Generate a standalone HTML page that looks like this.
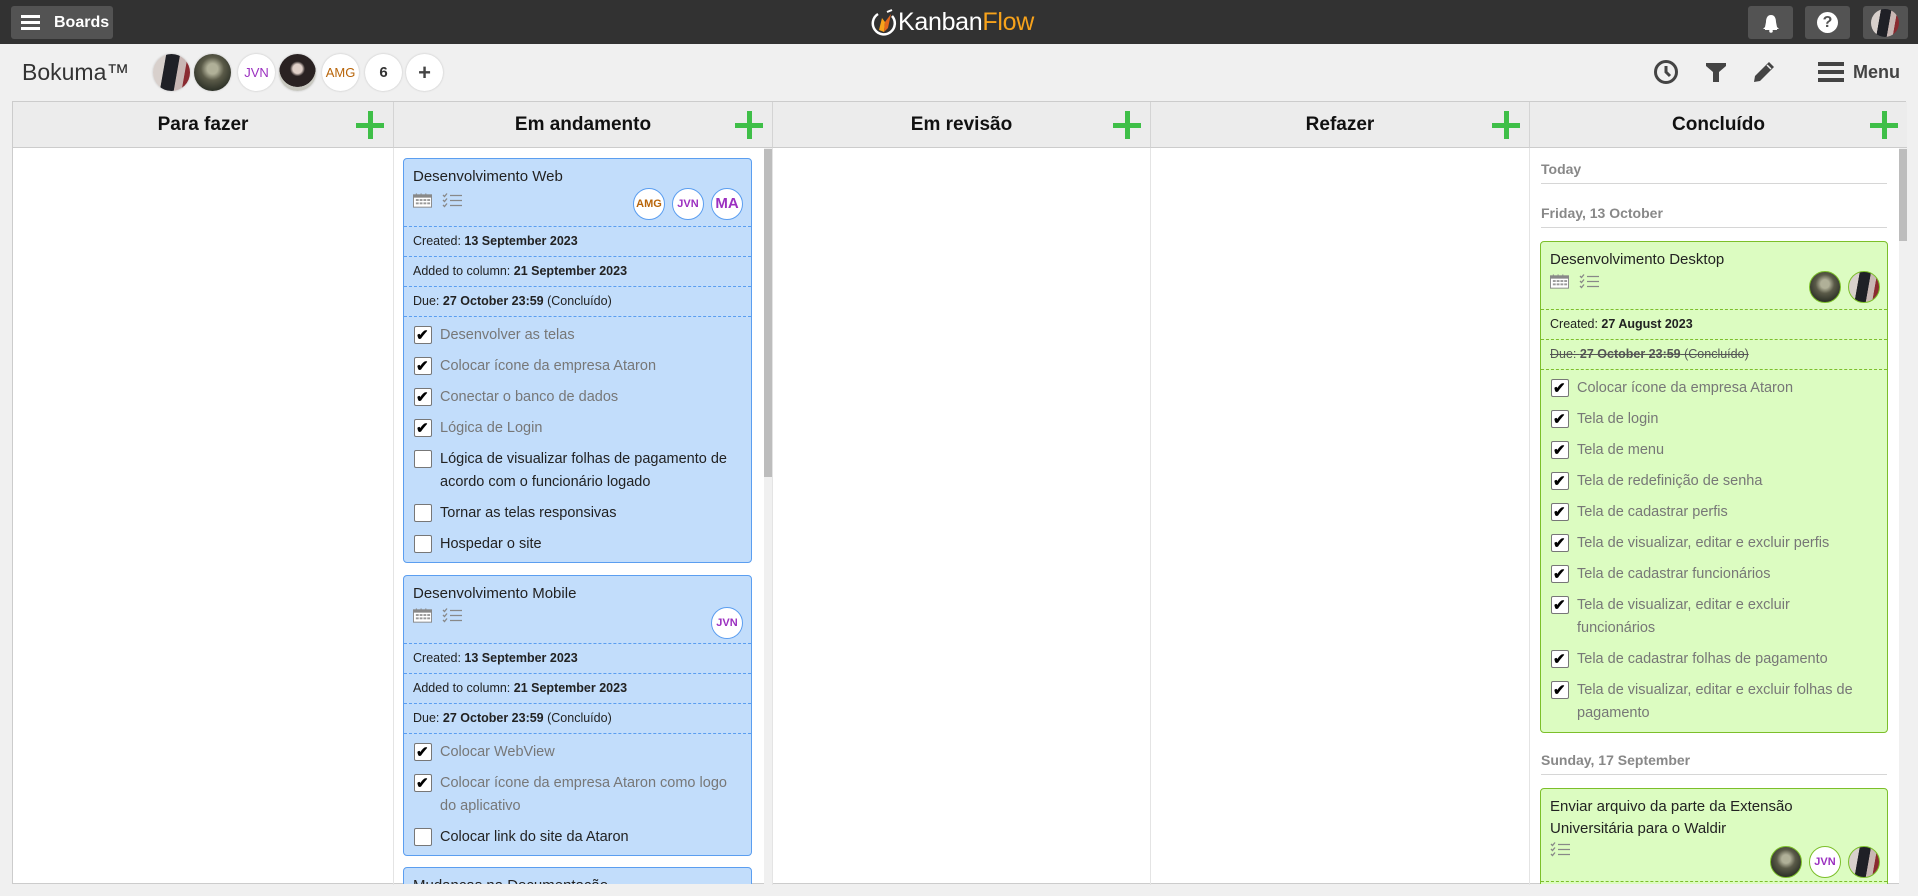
<!DOCTYPE html>
<html><head><meta charset="utf-8">
<style>
*{box-sizing:border-box;margin:0;padding:0}
body{width:1918px;height:896px;overflow:hidden;background:#f0f0f0;font-family:"Liberation Sans",Arial,sans-serif;position:relative}
.top{position:absolute;left:0;top:0;width:1918px;height:44px;background:#323232}
.tbtn{position:absolute;top:6px;height:33px;background:#535353;border-radius:3px}
.abs{position:absolute}
.av{position:absolute;width:37px;height:37px;border-radius:50%;background:#fff;box-shadow:0 0 2px rgba(0,0,0,.2);text-align:center;line-height:37px;font-size:13px}
.cav{position:absolute;top:0;width:32px;height:32px;border-radius:50%;background:#fff;text-align:center;line-height:30px;font-size:11px;font-weight:bold}
.ph1{background:linear-gradient(100deg,#d8d0cc 0 30%,#1f2026 31% 62%,#c9b7b4 63% 80%,#8a2a30 81%) !important}
.ph2{background:radial-gradient(circle at 50% 40%,#b0b098 0 18%,#5a5a48 40%,#2e3228 75%) !important}
.ph3{background:radial-gradient(circle at 50% 40%,#e0d0c8 0 16%,#2a2222 26% 62%,#c8c8c0 63%) !important}
.board{position:absolute;left:12px;top:101px;width:1894px;height:783px;background:#fff;border:1px solid #ccc}
.hdr{position:absolute;top:0;height:46px;background:#ececec;border-bottom:1px solid #ccc;border-right:1px solid #d4d4d4;text-align:center;font-weight:bold;font-size:19px;line-height:45px;color:#111}
.plus{position:absolute;right:9px;top:9px;width:28px;height:28px}
.plus:before{content:"";position:absolute;left:0;top:11.5px;width:28px;height:5px;background:#3fbf48}
.plus:after{content:"";position:absolute;top:0;left:11.5px;height:28px;width:5px;background:#3fbf48}
.vline{position:absolute;top:46px;width:1px;height:737px;background:#e4e4e4}
.card{position:absolute;border-radius:4px;padding:7px 0 0 0;font-size:15px;color:#222}
.blue{background:#c2ddfb;border:1px solid #5b9ef0}
.green{background:#dcfcc1;border:1px solid #7cbf2a}
.title{line-height:22px;padding-left:9px;color:#222}
.irow{position:relative;height:38px}
.ico{position:absolute;left:9px;top:5px}
.blue .cav{border:1px solid #5b9ef0}
.green .cav{border:1px solid #7cbf2a}
.info{border-top:1px dashed #5b9ef0;height:30px;line-height:29px;font-size:12.5px;padding-left:9px;color:#222}
.green .info{border-top-color:#7cbf2a}
.list{border-top:1px dashed #5b9ef0;padding-top:3px;padding-bottom:2px}
.green .list{border-top-color:#7cbf2a}
.it{position:relative;padding:4px 22px 4px 36px;line-height:23px;font-size:14.5px;color:#222}
.it.done{color:#777}
.cb{position:absolute;left:10px;top:6px;width:18px;height:18px;background:#fff;border:1px solid #777;border-radius:2px}
.done .cb:after{content:"\2714";position:absolute;left:1px;top:0px;font-size:15px;font-weight:bold;color:#000;line-height:17px}
.sec{position:absolute;left:1541px;width:346px;border-bottom:1px solid #d6d6d6;font-weight:bold;font-size:14px;color:#888;padding-bottom:6px}
.amg{color:#b8650a}.jvn{color:#9b30c0}
</style></head><body>
<div class="top">
  <div class="tbtn" style="left:11px;width:102px">
    <div class="abs" style="left:10px;top:9px;width:19px;height:3px;background:#fff"></div>
    <div class="abs" style="left:10px;top:15px;width:19px;height:3px;background:#fff"></div>
    <div class="abs" style="left:10px;top:21px;width:19px;height:3px;background:#fff"></div>
    <div class="abs" style="left:43px;top:0;line-height:33px;color:#fff;font-weight:bold;font-size:16px">Boards</div>
  </div>
  <svg class="abs" style="left:870px;top:8px" width="28" height="30" viewBox="0 0 28 30">
    <path d="M8 6 A11 11 0 1 0 22 8" fill="none" stroke="#fff" stroke-width="2.5"/>
    <path d="M9 22 L12 10 L15 14 L14 24Z" fill="#f7a21b"/><path d="M15 14 L21 6 L18 20 L14 24Z" fill="#e2661d"/>
    <path d="M17 4 L22 2" stroke="#fff" stroke-width="2"/>
  </svg>
  <div class="abs" style="left:898px;top:7px;font-size:25px;line-height:30px;color:#fff;letter-spacing:-.3px">Kanban<span style="color:#f7a21b">Flow</span></div>
  <div class="tbtn" style="left:1748px;width:45px"><svg class="abs" style="left:13px;top:7px" width="20" height="20" viewBox="0 0 20 20"><path d="M10 2 C6 2 5 6 5 9 L4 14 L2 16 L18 16 L16 14 L15 9 C15 6 14 2 10 2Z" fill="#fff"/><rect x="4" y="15" width="12" height="2" fill="#fff"/><circle cx="10" cy="18" r="1.8" fill="#fff"/></svg></div>
  <div class="tbtn" style="left:1805px;width:45px"><div class="abs" style="left:12px;top:6px;width:21px;height:21px;border-radius:50%;background:#fff;color:#535353;font-weight:bold;font-size:16px;text-align:center;line-height:21px">?</div></div>
  <div class="tbtn" style="left:1863px;width:45px"><div class="abs ph1" style="left:8px;top:3px;width:28px;height:28px;border-radius:50%"></div></div>
</div>

<div class="abs" style="left:22px;top:57px;font-size:23px;color:#333;line-height:30px">Bokuma™</div>
<div class="av ph1" style="left:153px;top:54px"></div>
<div class="av ph2" style="left:194px;top:54px"></div>
<div class="av jvn" style="left:238px;top:54px">JVN</div>
<div class="av ph3" style="left:279px;top:54px"></div>
<div class="av amg" style="left:322px;top:54px">AMG</div>
<div class="av" style="left:365px;top:54px;color:#333;font-weight:bold;font-size:15px">6</div>
<div class="av" style="left:406px;top:54px;color:#444;font-weight:bold;font-size:22px">+</div>

<svg class="abs" style="left:1653px;top:59px" width="26" height="26" viewBox="0 0 26 26"><circle cx="13" cy="13" r="10.5" fill="none" stroke="#444" stroke-width="3"/><path d="M13 7 L13 13 L17 17" fill="none" stroke="#444" stroke-width="3"/></svg>
<svg class="abs" style="left:1704px;top:60px" width="24" height="24" viewBox="0 0 24 24"><path d="M2 3 L22 3 L22 6 L15 12 L15 22 L9 22 L9 12 L2 6Z" fill="#444"/></svg>
<svg class="abs" style="left:1752px;top:60px" width="24" height="24" viewBox="0 0 24 24"><path d="M17 2 L22 7 L8 21 L2 22 L3 16Z" fill="#444"/><path d="M15 5 L19 9" stroke="#f0f0f0" stroke-width="1.5"/></svg>
<div class="abs" style="left:1818px;top:62px;width:26px;height:4px;background:#444"></div>
<div class="abs" style="left:1818px;top:70px;width:26px;height:4px;background:#444"></div>
<div class="abs" style="left:1818px;top:78px;width:26px;height:4px;background:#444"></div>
<div class="abs" style="left:1853px;top:60px;font-size:18px;font-weight:bold;color:#444;line-height:24px">Menu</div>

<div class="board">
  <div class="hdr" style="left:0;width:381px">Para fazer<div class="plus"></div></div>
  <div class="hdr" style="left:381px;width:379px">Em andamento<div class="plus"></div></div>
  <div class="hdr" style="left:760px;width:378px">Em revisão<div class="plus"></div></div>
  <div class="hdr" style="left:1138px;width:379px">Refazer<div class="plus"></div></div>
  <div class="hdr" style="left:1517px;width:377px;border-right:none">Concluído<div class="plus"></div></div>
  <div class="vline" style="left:380px"></div>
  <div class="vline" style="left:759px"></div>
  <div class="vline" style="left:1137px"></div>
  <div class="vline" style="left:1516px"></div>
  <div class="abs" style="left:751px;top:46px;width:8px;height:737px;background:#f0f0f0"></div>
  <div class="abs" style="left:751px;top:47px;width:8px;height:328px;background:#bdbdbd"></div>
  <div class="abs" style="left:1886px;top:46px;width:8px;height:737px;background:#f0f0f0"></div>
  <div class="abs" style="left:1886px;top:47px;width:8px;height:92px;background:#bdbdbd"></div>
</div>

<svg width="0" height="0" style="position:absolute"><defs>
<symbol id="cal" viewBox="0 0 20 15"><rect x="0.5" y="1.5" width="19" height="13" fill="#fff" stroke="#888"/><rect x="0.5" y="1.5" width="19" height="3" fill="#888"/><g fill="#999"><rect x="3" y="6" width="3" height="2"/><rect x="7" y="6" width="3" height="2"/><rect x="11" y="6" width="3" height="2"/><rect x="15" y="6" width="3" height="2"/><rect x="3" y="9.5" width="3" height="2"/><rect x="7" y="9.5" width="3" height="2"/><rect x="11" y="9.5" width="3" height="2"/><rect x="15" y="9.5" width="3" height="2"/></g><g fill="#888"><rect x="3" y="0" width="1" height="2"/><rect x="8" y="0" width="1" height="2"/><rect x="13" y="0" width="1" height="2"/></g></symbol>
<symbol id="chk" viewBox="0 0 20 15"><g fill="none" stroke="#888" stroke-width="1.3"><path d="M1 2 L2.5 3.5 L5 0.5M1 7 L2.5 8.5 L5 5.5M1 12 L2.5 13.5 L5 10.5"/><path d="M8 2.5 H20M8 7.5 H20M8 12.5 H20"/></g></symbol>
</defs></svg>

<div class="card blue" style="left:403px;top:158px;width:349px;height:405px">
  <div class="title">Desenvolvimento Web</div>
  <div class="irow">
    <svg class="ico" width="19" height="15" style="left:9px;top:5px"><use href="#cal"/></svg>
    <svg class="ico" width="20" height="15" style="left:38px;top:5px"><use href="#chk"/></svg>
    <div class="cav amg" style="left:229px">AMG</div>
    <div class="cav jvn" style="left:268px">JVN</div>
    <div class="cav jvn" style="left:307px;font-size:15px">MA</div>
  </div>
  <div class="info">Created: <b>13 September 2023</b></div>
  <div class="info">Added to column: <b>21 September 2023</b></div>
  <div class="info">Due: <b>27 October 23:59</b> (Concluído)</div>
  <div class="list">
    <div class="it done"><span class="cb"></span>Desenvolver as telas</div>
    <div class="it done"><span class="cb"></span>Colocar ícone da empresa Ataron</div>
    <div class="it done"><span class="cb"></span>Conectar o banco de dados</div>
    <div class="it done"><span class="cb"></span>Lógica de Login</div>
    <div class="it"><span class="cb"></span>Lógica de visualizar folhas de pagamento de acordo com o funcionário logado</div>
    <div class="it"><span class="cb"></span>Tornar as telas responsivas</div>
    <div class="it"><span class="cb"></span>Hospedar o site</div>
  </div>
</div>

<div class="card blue" style="left:403px;top:575px;width:349px;height:281px">
  <div class="title">Desenvolvimento Mobile</div>
  <div class="irow">
    <svg class="ico" width="19" height="15" style="left:9px;top:3px"><use href="#cal"/></svg>
    <svg class="ico" width="20" height="15" style="left:38px;top:3px"><use href="#chk"/></svg>
    <div class="cav jvn" style="left:307px;top:2px">JVN</div>
  </div>
  <div class="info">Created: <b>13 September 2023</b></div>
  <div class="info">Added to column: <b>21 September 2023</b></div>
  <div class="info">Due: <b>27 October 23:59</b> (Concluído)</div>
  <div class="list">
    <div class="it done"><span class="cb"></span>Colocar WebView</div>
    <div class="it done"><span class="cb"></span>Colocar ícone da empresa Ataron como logo do aplicativo</div>
    <div class="it"><span class="cb"></span>Colocar link do site da Ataron</div>
  </div>
</div>

<div class="abs" style="left:403px;top:867px;width:349px;height:17px;overflow:hidden">
  <div class="card blue" style="left:0;top:0;width:349px;height:60px"><div class="title">Mudanças na Documentação</div></div>
</div>

<div class="sec" style="top:161px">Today</div>
<div class="sec" style="top:205px">Friday, 13 October</div>
<div class="card green" style="left:1540px;top:241px;width:348px;height:492px">
  <div class="title">Desenvolvimento Desktop</div>
  <div class="irow">
    <svg class="ico" width="19" height="15" style="left:9px;top:3px"><use href="#cal"/></svg>
    <svg class="ico" width="20" height="15" style="left:38px;top:3px"><use href="#chk"/></svg>
    <div class="cav ph2" style="left:268px;top:0"></div>
    <div class="cav ph1" style="left:307px;top:0"></div>
  </div>
  <div class="info">Created: <b>27 August 2023</b></div>
  <div class="info" style="text-decoration:line-through;color:#555">Due: <b>27 October 23:59</b> (Concluído)</div>
  <div class="list">
    <div class="it done"><span class="cb"></span>Colocar ícone da empresa Ataron</div>
    <div class="it done"><span class="cb"></span>Tela de login</div>
    <div class="it done"><span class="cb"></span>Tela de menu</div>
    <div class="it done"><span class="cb"></span>Tela de redefinição de senha</div>
    <div class="it done"><span class="cb"></span>Tela de cadastrar perfis</div>
    <div class="it done"><span class="cb"></span>Tela de visualizar, editar e excluir perfis</div>
    <div class="it done"><span class="cb"></span>Tela de cadastrar funcionários</div>
    <div class="it done" style="padding-right:60px"><span class="cb"></span>Tela de visualizar, editar e excluir funcionários</div>
    <div class="it done"><span class="cb"></span>Tela de cadastrar folhas de pagamento</div>
    <div class="it done"><span class="cb"></span>Tela de visualizar, editar e excluir folhas de pagamento</div>
  </div>
</div>
<div class="sec" style="top:752px">Sunday, 17 September</div>
<div class="abs" style="left:1540px;top:788px;width:348px;height:96px;overflow:hidden">
  <div class="card green" style="left:0;top:0;width:348px;height:140px">
    <div class="title" style="padding-right:20px">Enviar arquivo da parte da Extensão Universitária para o Waldir</div>
    <div class="irow" style="height:41px">
      <svg class="ico" width="20" height="15" style="left:9px;top:2px"><use href="#chk"/></svg>
      <div class="cav ph2" style="left:229px;top:6px"></div>
      <div class="cav jvn" style="left:268px;top:6px">JVN</div>
      <div class="cav ph1" style="left:307px;top:6px"></div>
    </div>
    <div class="info"></div>
  </div>
</div>
</body></html>
